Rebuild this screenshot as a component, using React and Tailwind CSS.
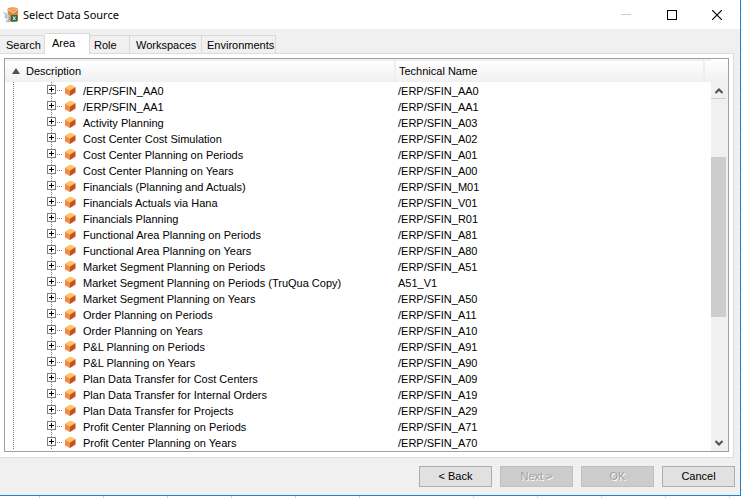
const sources = [
  ['/ERP/SFIN_AA0', '/ERP/SFIN_AA0'],
  ['/ERP/SFIN_AA1', '/ERP/SFIN_AA1'],
  ['Activity Planning', '/ERP/SFIN_A03'],
  ['Cost Center Cost Simulation', '/ERP/SFIN_A02'],
  ['Cost Center Planning on Periods', '/ERP/SFIN_A01'],
  ['Cost Center Planning on Years', '/ERP/SFIN_A00'],
  ['Financials (Planning and Actuals)', '/ERP/SFIN_M01'],
  ['Financials Actuals via Hana', '/ERP/SFIN_V01'],
  ['Financials Planning', '/ERP/SFIN_R01'],
  ['Functional Area Planning on Periods', '/ERP/SFIN_A81'],
  ['Functional Area Planning on Years', '/ERP/SFIN_A80'],
  ['Market Segment Planning on Periods', '/ERP/SFIN_A51'],
  ['Market Segment Planning on Periods (TruQua Copy)', 'A51_V1'],
  ['Market Segment Planning on Years', '/ERP/SFIN_A50'],
  ['Order Planning on Periods', '/ERP/SFIN_A11'],
  ['Order Planning on Years', '/ERP/SFIN_A10'],
  ['P&L Planning on Periods', '/ERP/SFIN_A91'],
  ['P&L Planning on Years', '/ERP/SFIN_A90'],
  ['Plan Data Transfer for Cost Centers', '/ERP/SFIN_A09'],
  ['Plan Data Transfer for Internal Orders', '/ERP/SFIN_A19'],
  ['Plan Data Transfer for Projects', '/ERP/SFIN_A29'],
  ['Profit Center Planning on Periods', '/ERP/SFIN_A71'],
  ['Profit Center Planning on Years', '/ERP/SFIN_A70'],
];

const tabs = [
  { name: 'Search', size: 'w-[45px] pl-[6px]' },
  { name: 'Area', size: 'w-[45px] pl-[7px]' },
  { name: 'Role', size: 'w-10 pl-1' },
  { name: 'Workspaces', size: 'w-[72px] pl-[6px]' },
  { name: 'Environments', size: 'w-[74px] pl-[5px]' },
];

function AppIcon() {
  return (
    <svg width="16" height="16" viewBox="0 0 16 16" aria-hidden="true">
      <path d="M4.500 2Q5.500 0.300 9.500 0.300T15 2V13.500Q10 16 5.500 14z" fill="#e5853a" />
      <path d="M5 2Q9.500 -0.500 14.500 2L10 4.500z" fill="#f3a463" />
      <path d="M5 2.500Q9 5.500 10 5.500T14.500 2.500" fill="none" stroke="#fbdcb8" strokeWidth="1" />
      <path d="M0 5L4 6L7 9L5.500 12L7 15.500L2.500 15L4 12L1 10L2.500 9z" fill="#a9bfd6" />
      <path d="M1 5.500L5 8L4.500 14" fill="none" stroke="#dbe6f0" strokeWidth="1" />
      <rect x="8" y="8" width="6.500" height="6.500" fill="#1e7145" />
      <path d="M10 9.500L12.500 13M12.500 9.500L10 13" stroke="#fff" strokeWidth="1" />
    </svg>
  );
}

function Branch() {
  return (
    <svg className="shrink-0" width="42" height="16" viewBox="0 0 42 16" aria-hidden="true">
      <path d="M8.500 0V16" stroke="#808080" strokeDasharray="1 1" />
    </svg>
  );
}

function Expander({ label }) {
  return (
    <button type="button" aria-label={`Expand ${label}`} className="block shrink-0">
      <svg width="9" height="16" viewBox="0 0 9 16" aria-hidden="true">
        <path d="M4.500 0V16" stroke="#808080" strokeDasharray="1 1" />
        <rect x="0.500" y="3.500" width="8" height="8" fill="#fff" stroke="#808080" />
        <path d="M2 7.500H7M4.500 5V10" stroke="#000" />
      </svg>
    </button>
  );
}

function Cube() {
  return (
    <svg className="shrink-0" width="20" height="16" viewBox="0 0 20 16" aria-hidden="true">
      <path d="M1 8.500H6" stroke="#808080" strokeDasharray="1 1" />
      <path d="M9 5.500L14.500 2.500L19.500 5L14 8.500z" fill="#fbc662" />
      <path d="M9 5.500L14 8.500V14L9 11.500z" fill="#f5894a" />
      <path d="M14 8.500L19.500 5V10.500L14 14z" fill="#c94f22" />
    </svg>
  );
}

function ScrollArrow({ down }) {
  return (
    <svg width="16" height="16" viewBox="0 0 16 16" aria-hidden="true">
      <path d={down ? 'M4.500 6L8 9.500L11.500 6' : 'M4.500 11L8 7.500L11.500 11'} fill="none" stroke="#505050" strokeWidth="2" />
    </svg>
  );
}

function ActionButton({ children, disabled }) {
  return (
    <button
      type="button"
      disabled={disabled}
      className="h-[21px] w-[73px] border border-[#adadad] bg-[#e1e1e1] text-center leading-[19px] disabled:border-[#bfbfbf] disabled:bg-[#cccccc] disabled:text-[#a0a0a0] disabled:[text-shadow:1px_1px_0_#fff]"
    >
      {children}
    </button>
  );
}

function TitleBar() {
  return (
    <header className="flex h-[29px] items-center bg-white pl-[3px]">
      <AppIcon />
      <h1 className="flex-1 pl-1 font-['Noto_Sans',sans-serif] text-[11px] leading-4">Select Data Source</h1>
      <button type="button" aria-label="Minimize" className="flex w-[46px] justify-center">
        <svg width="10" height="10" viewBox="0 0 10 10"><path d="M0 4.500H10" stroke="#ccc" /></svg>
      </button>
      <button type="button" aria-label="Maximize" className="flex w-[45px] justify-center">
        <svg width="10" height="10" viewBox="0 0 10 10"><rect x="0.500" y="0.500" width="9" height="9" fill="none" stroke="#000" /></svg>
      </button>
      <button type="button" aria-label="Close" className="flex w-[46px] justify-center">
        <svg width="10" height="10" viewBox="0 0 10 10"><path d="M0 0L10 10M10 0L0 10" stroke="#000" strokeWidth="1.200" /></svg>
      </button>
    </header>
  );
}

function SourceTable() {
  return (
    <div className="flex border border-[#a0a0a0] bg-white">
      <div className="min-w-0 flex-1 pb-px">
        <table className="w-full table-fixed border-collapse text-left">
          <colgroup>
            <col className="w-[390px]" />
            <col />
            <col className="w-[7px]" />
          </colgroup>
          <thead>
            <tr className="h-[23px] bg-[linear-gradient(#f0f0f0_2px,#ffffff_2px,#f0f0f0)]">
              <th className="border-r-2 border-[#efefef] p-0 font-normal">
                <div className="flex items-center gap-[6px] pl-[7px]">
                  <svg width="8" height="6" viewBox="0 0 8 6" aria-hidden="true"><path d="M4 0L8 6H0z" fill="#505050" /></svg>
                  Description
                </div>
              </th>
              <th className="border-r-2 border-[#efefef] p-0 pl-[3px] font-normal">Technical Name</th>
              <td className="p-0" />
            </tr>
          </thead>
          <tbody>
            {sources.map(([description, technicalName]) => (
              <tr key={description} className="h-4">
                <td className="p-0">
                  <div className="flex h-4 items-center whitespace-nowrap">
                    <Branch />
                    <Expander label={description} />
                    <Cube />
                    <span className="pt-[2px] pl-[7px] leading-[14px]">{description}</span>
                  </div>
                </td>
                <td className="p-0 pt-[2px] pl-[3px] leading-[14px]">{technicalName}</td>
                <td className="p-0" />
              </tr>
            ))}
          </tbody>
        </table>
      </div>
      <div className="flex w-[17px] flex-col bg-[#f0f0f0]">
        <div className="h-[23px] bg-linear-to-b from-white to-[#f0f0f0]" />
        <button type="button" aria-label="Scroll up" className="mr-[2px] h-[17px] border-b border-[#cdcdcd]">
          <ScrollArrow />
        </button>
        <div className="flex flex-1 flex-col pt-[58px] pr-[2px]">
          <div className="h-[160px] bg-[#cdcdcd]" />
        </div>
        <button type="button" aria-label="Scroll down" className="mr-[2px] h-[17px]">
          <ScrollArrow down />
        </button>
      </div>
    </div>
  );
}

export default function App() {
  return (
    <div className="min-h-screen bg-white bg-[repeating-linear-gradient(to_bottom,transparent_0_9px,#d4d4d4_9px_10px,transparent_10px_20px)] font-['Liberation_Sans',Arial,sans-serif] text-[11px] leading-4 text-black">
      <main className="mr-px border-r border-b border-[#1883d7] bg-[#f0f0f0]">
        <TitleBar />
        <div role="tablist" className="flex h-6 items-end">
          {tabs.map(({ name, size }) => (
            <button
              key={name}
              type="button"
              role="tab"
              aria-selected={name === 'Area'}
              className={`${size} h-[18px] border-t border-r border-[#d9d9d9] text-left leading-[18px] aria-selected:-mb-px aria-selected:h-[21px] aria-selected:bg-white aria-selected:pb-[2px]`}
            >
              {name}
            </button>
          ))}
        </div>
        <div className="mr-[6px] border-t border-r border-b border-[#dcdcdc] bg-white px-1 pt-1 pb-[5px]">
          <SourceTable />
        </div>
        <footer className="flex justify-end gap-2 pt-2 pr-[5px] pb-2">
          <ActionButton>&lt; Back</ActionButton>
          <ActionButton disabled>Next &gt;</ActionButton>
          <ActionButton disabled>OK</ActionButton>
          <ActionButton>Cancel</ActionButton>
        </footer>
      </main>
      <div className="flex h-[2px] bg-white">
        <div className="w-[434px] bg-[repeating-linear-gradient(to_right,transparent_0_39px,#d4d4d4_39px_40px,transparent_40px_64px)] bg-size-[384px_2px] bg-no-repeat" />
        <div className="flex-1 bg-[repeating-linear-gradient(to_right,transparent_0_39px,#d4d4d4_39px_40px,transparent_40px_64px)]" />
      </div>
    </div>
  );
}
